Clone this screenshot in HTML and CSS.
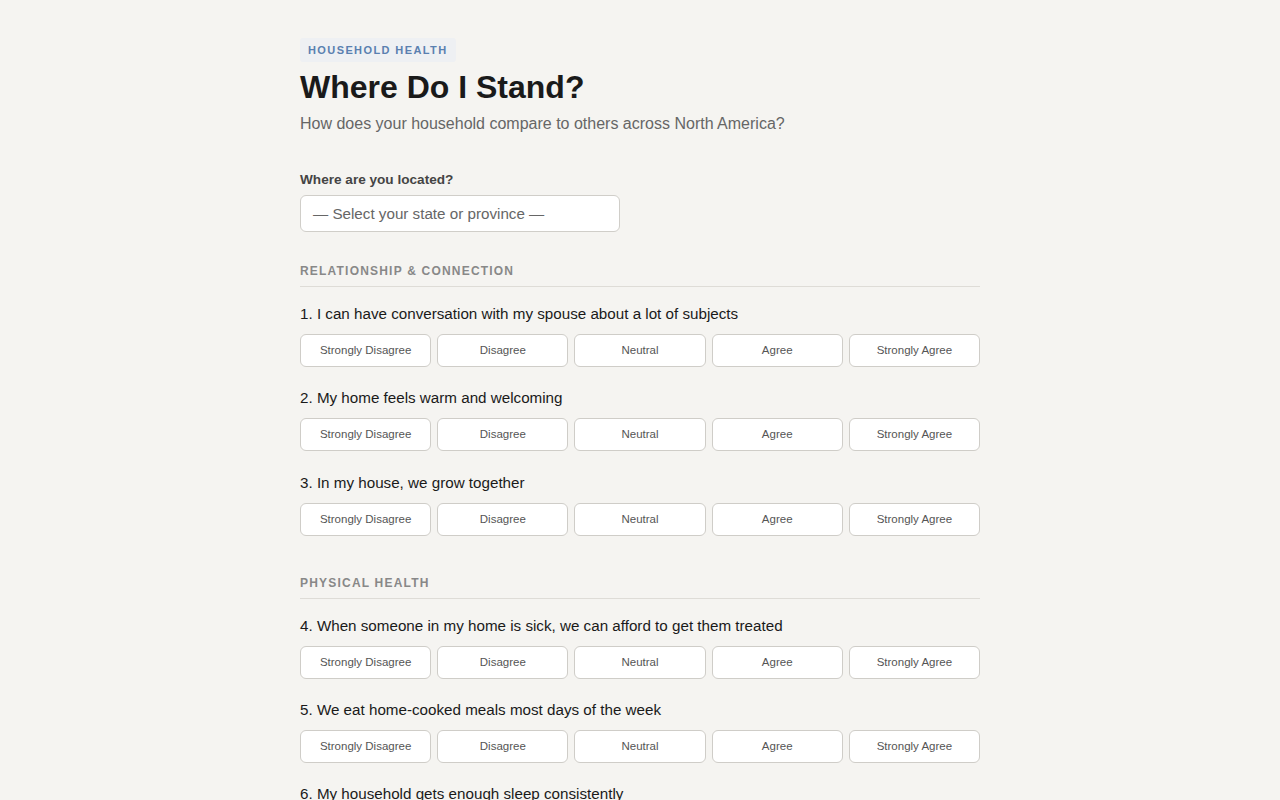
FILE: index.html
```html
<!DOCTYPE html>
<html lang="en">
<head>
    <meta charset="UTF-8">
    <title>Where Do I Stand?</title>
    <link rel="stylesheet" href="styles.css">
</head>
<body>
<div class="page">
    <span class="tag">HOUSEHOLD HEALTH</span>
    <h1>Where Do I Stand?</h1>
    <p class="sub">How does your household compare to others across North America?</p>

    <label class="loc-label" for="loc">Where are you located?</label>
    <div class="select">— Select your state or province —</div>

    <div class="section">
        <h2>RELATIONSHIP &amp; CONNECTION</h2>
        <div class="q">
            <p>1. I can have conversation with my spouse about a lot of subjects</p>
            <div class="opts">
                <button>Strongly Disagree</button><button>Disagree</button><button>Neutral</button><button>Agree</button><button>Strongly Agree</button>
            </div>
        </div>
        <div class="q">
            <p>2. My home feels warm and welcoming</p>
            <div class="opts">
                <button>Strongly Disagree</button><button>Disagree</button><button>Neutral</button><button>Agree</button><button>Strongly Agree</button>
            </div>
        </div>
        <div class="q">
            <p>3. In my house, we grow together</p>
            <div class="opts">
                <button>Strongly Disagree</button><button>Disagree</button><button>Neutral</button><button>Agree</button><button>Strongly Agree</button>
            </div>
        </div>
    </div>

    <div class="section">
        <h2>PHYSICAL HEALTH</h2>
        <div class="q">
            <p>4. When someone in my home is sick, we can afford to get them treated</p>
            <div class="opts">
                <button>Strongly Disagree</button><button>Disagree</button><button>Neutral</button><button>Agree</button><button>Strongly Agree</button>
            </div>
        </div>
        <div class="q">
            <p>5. We eat home-cooked meals most days of the week</p>
            <div class="opts">
                <button>Strongly Disagree</button><button>Disagree</button><button>Neutral</button><button>Agree</button><button>Strongly Agree</button>
            </div>
        </div>
        <div class="q">
            <p>6. My household gets enough sleep consistently</p>
            <div class="opts">
                <button>Strongly Disagree</button><button>Disagree</button><button>Neutral</button><button>Agree</button><button>Strongly Agree</button>
            </div>
        </div>
    </div>
</div>
</body>
</html>
```

FILE: styles.css
```css
body {
    margin: 0;
    background-color: #f5f4f1;
    font-family: "Liberation Sans", Arial, sans-serif;
    color: #1a1a1a;
}

.page {
    width: 680px;
    margin: 0 auto;
    padding-top: 38px;
}

.tag {
    display: inline-block;
    padding: 5px 8px;
    background-color: #eef0f3;
    color: #5a80b0;
    font-size: 11px;
    font-weight: bold;
    letter-spacing: 1.4px;
    line-height: 14px;
    border-radius: 3px;
}

h1 {
    margin: 5px 0 0;
    font-size: 32px;
    line-height: 40px;
    font-weight: bold;
    color: #1a1a1a;
}

.sub {
    margin: 6px 0 0;
    font-size: 16px;
    line-height: 22px;
    color: #666;
}

.loc-label {
    display: block;
    margin-top: 36px;
    font-size: 13.6px;
    line-height: 18px;
    font-weight: bold;
    color: #444;
}

.select {
    box-sizing: border-box;
    width: 320px;
    height: 37px;
    margin-top: 6px;
    padding: 0 12px;
    background-color: #fff;
    border: 1px solid #d0cec9;
    border-radius: 6px;
    font-size: 15.2px;
    line-height: 35px;
    color: #666;
}

.section {
    margin-top: 31px;
}

.section + .section {
    margin-top: 39px;
}

h2 {
    margin: 0 0 16px;
    padding-bottom: 7px;
    border-bottom: 1px solid #dedcd7;
    font-size: 12px;
    line-height: 16px;
    letter-spacing: 1.2px;
    font-weight: bold;
    color: #888;
}

.q {
    margin-bottom: 20.3px;
}

.q p {
    margin: 0 0 9px;
    font-size: 15.2px;
    line-height: 22px;
    color: #1a1a1a;
}

.opts {
    display: grid;
    grid-template-columns: repeat(5, 1fr);
    gap: 6px;
}

.opts button {
    height: 33px;
    padding: 0 0 1px;
    background-color: #fff;
    border: 1px solid #cfcdc8;
    border-radius: 6px;
    font-family: "Liberation Sans", Arial, sans-serif;
    font-size: 11.5px;
    color: #555;
    cursor: pointer;
}
```
